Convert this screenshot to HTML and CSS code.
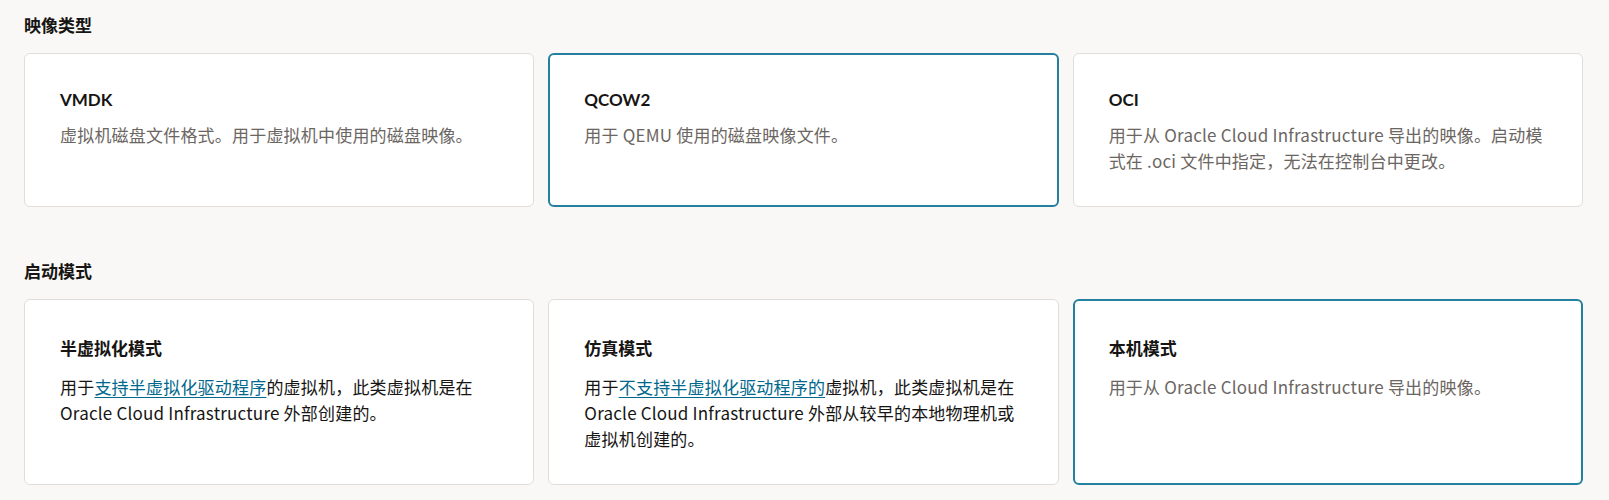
FILE: index.html
```html
<!DOCTYPE html>
<html lang="zh-CN">
<head>
<meta charset="utf-8">
<title>映像类型</title>
<link rel="stylesheet" href="styles.css">
</head>
<body>
<div class="page">
  <section class="group">
    <h2 class="group-title">映像类型</h2>
    <div class="cards">
      <div class="card">
        <div class="card-title">VMDK</div>
        <p class="card-desc">虚拟机磁盘文件格式。用于虚拟机中使用的磁盘映像。</p>
      </div>
      <div class="card selected">
        <div class="card-title">QCOW2</div>
        <p class="card-desc">用于 QEMU 使用的磁盘映像文件。</p>
      </div>
      <div class="card">
        <div class="card-title">OCI</div>
        <p class="card-desc">用于从 Oracle Cloud Infrastructure 导出的映像。启动模式在 .oci 文件中指定，无法在控制台中更改。</p>
      </div>
    </div>
  </section>
  <section class="group group-second">
    <h2 class="group-title">启动模式</h2>
    <div class="cards cards-cjk">
      <div class="card">
        <div class="card-title">半虚拟化模式</div>
        <p class="card-desc dark">用于<a href="#" class="link">支持半虚拟化驱动程序</a>的虚拟机，此类虚拟机是在 Oracle Cloud Infrastructure 外部创建的。</p>
      </div>
      <div class="card">
        <div class="card-title">仿真模式</div>
        <p class="card-desc dark">用于<a href="#" class="link">不支持半虚拟化驱动程序的</a>虚拟机，此类虚拟机是在 Oracle Cloud Infrastructure 外部从较早的本地物理机或虚拟机创建的。</p>
      </div>
      <div class="card selected">
        <div class="card-title">本机模式</div>
        <p class="card-desc">用于从 Oracle Cloud Infrastructure 导出的映像。</p>
      </div>
    </div>
  </section>
</div>
</body>
</html>
```

FILE: styles.css
```css
html, body {
  margin: 0;
  padding: 0;
  background: #f9f8f6;
}

body {
  font-family: "Noto Sans CJK SC", "Noto Sans", sans-serif;
  color: #161513;
}

.page {
  padding: 13px 26px 0 24px;
}

.group-title {
  margin: 0 0 16px 0;
  font-size: 17px;
  line-height: 24px;
  font-weight: 700;
  color: #161513;
}

.group-second {
  margin-top: 52px;
}

.cards {
  display: grid;
  grid-template-columns: repeat(3, 1fr);
  gap: 14px;
}

.card {
  background: #ffffff;
  border: 1px solid #e0dddb;
  border-radius: 6px;
  padding: 34px 34px 32px 35px;
}

.card.selected {
  border: 2px solid #25809f;
  padding: 33px 33px 31px 34px;
}

.card-title {
  font-family: "Lato", "Noto Sans CJK SC", sans-serif;
  font-size: 17px;
  line-height: 24px;
  font-weight: 700;
  color: #161513;
}

.cards-cjk .card-title {
  line-height: 30px;
}

.card-desc {
  margin: 10px 0 0 0;
  font-size: 17px;
  line-height: 26px;
  letter-spacing: 0.2px;
  color: #6b6662;
}

.card-desc.dark {
  color: #161513;
}

.link {
  color: #00688c;
  text-decoration: underline;
  text-underline-offset: 3px;
}
```
